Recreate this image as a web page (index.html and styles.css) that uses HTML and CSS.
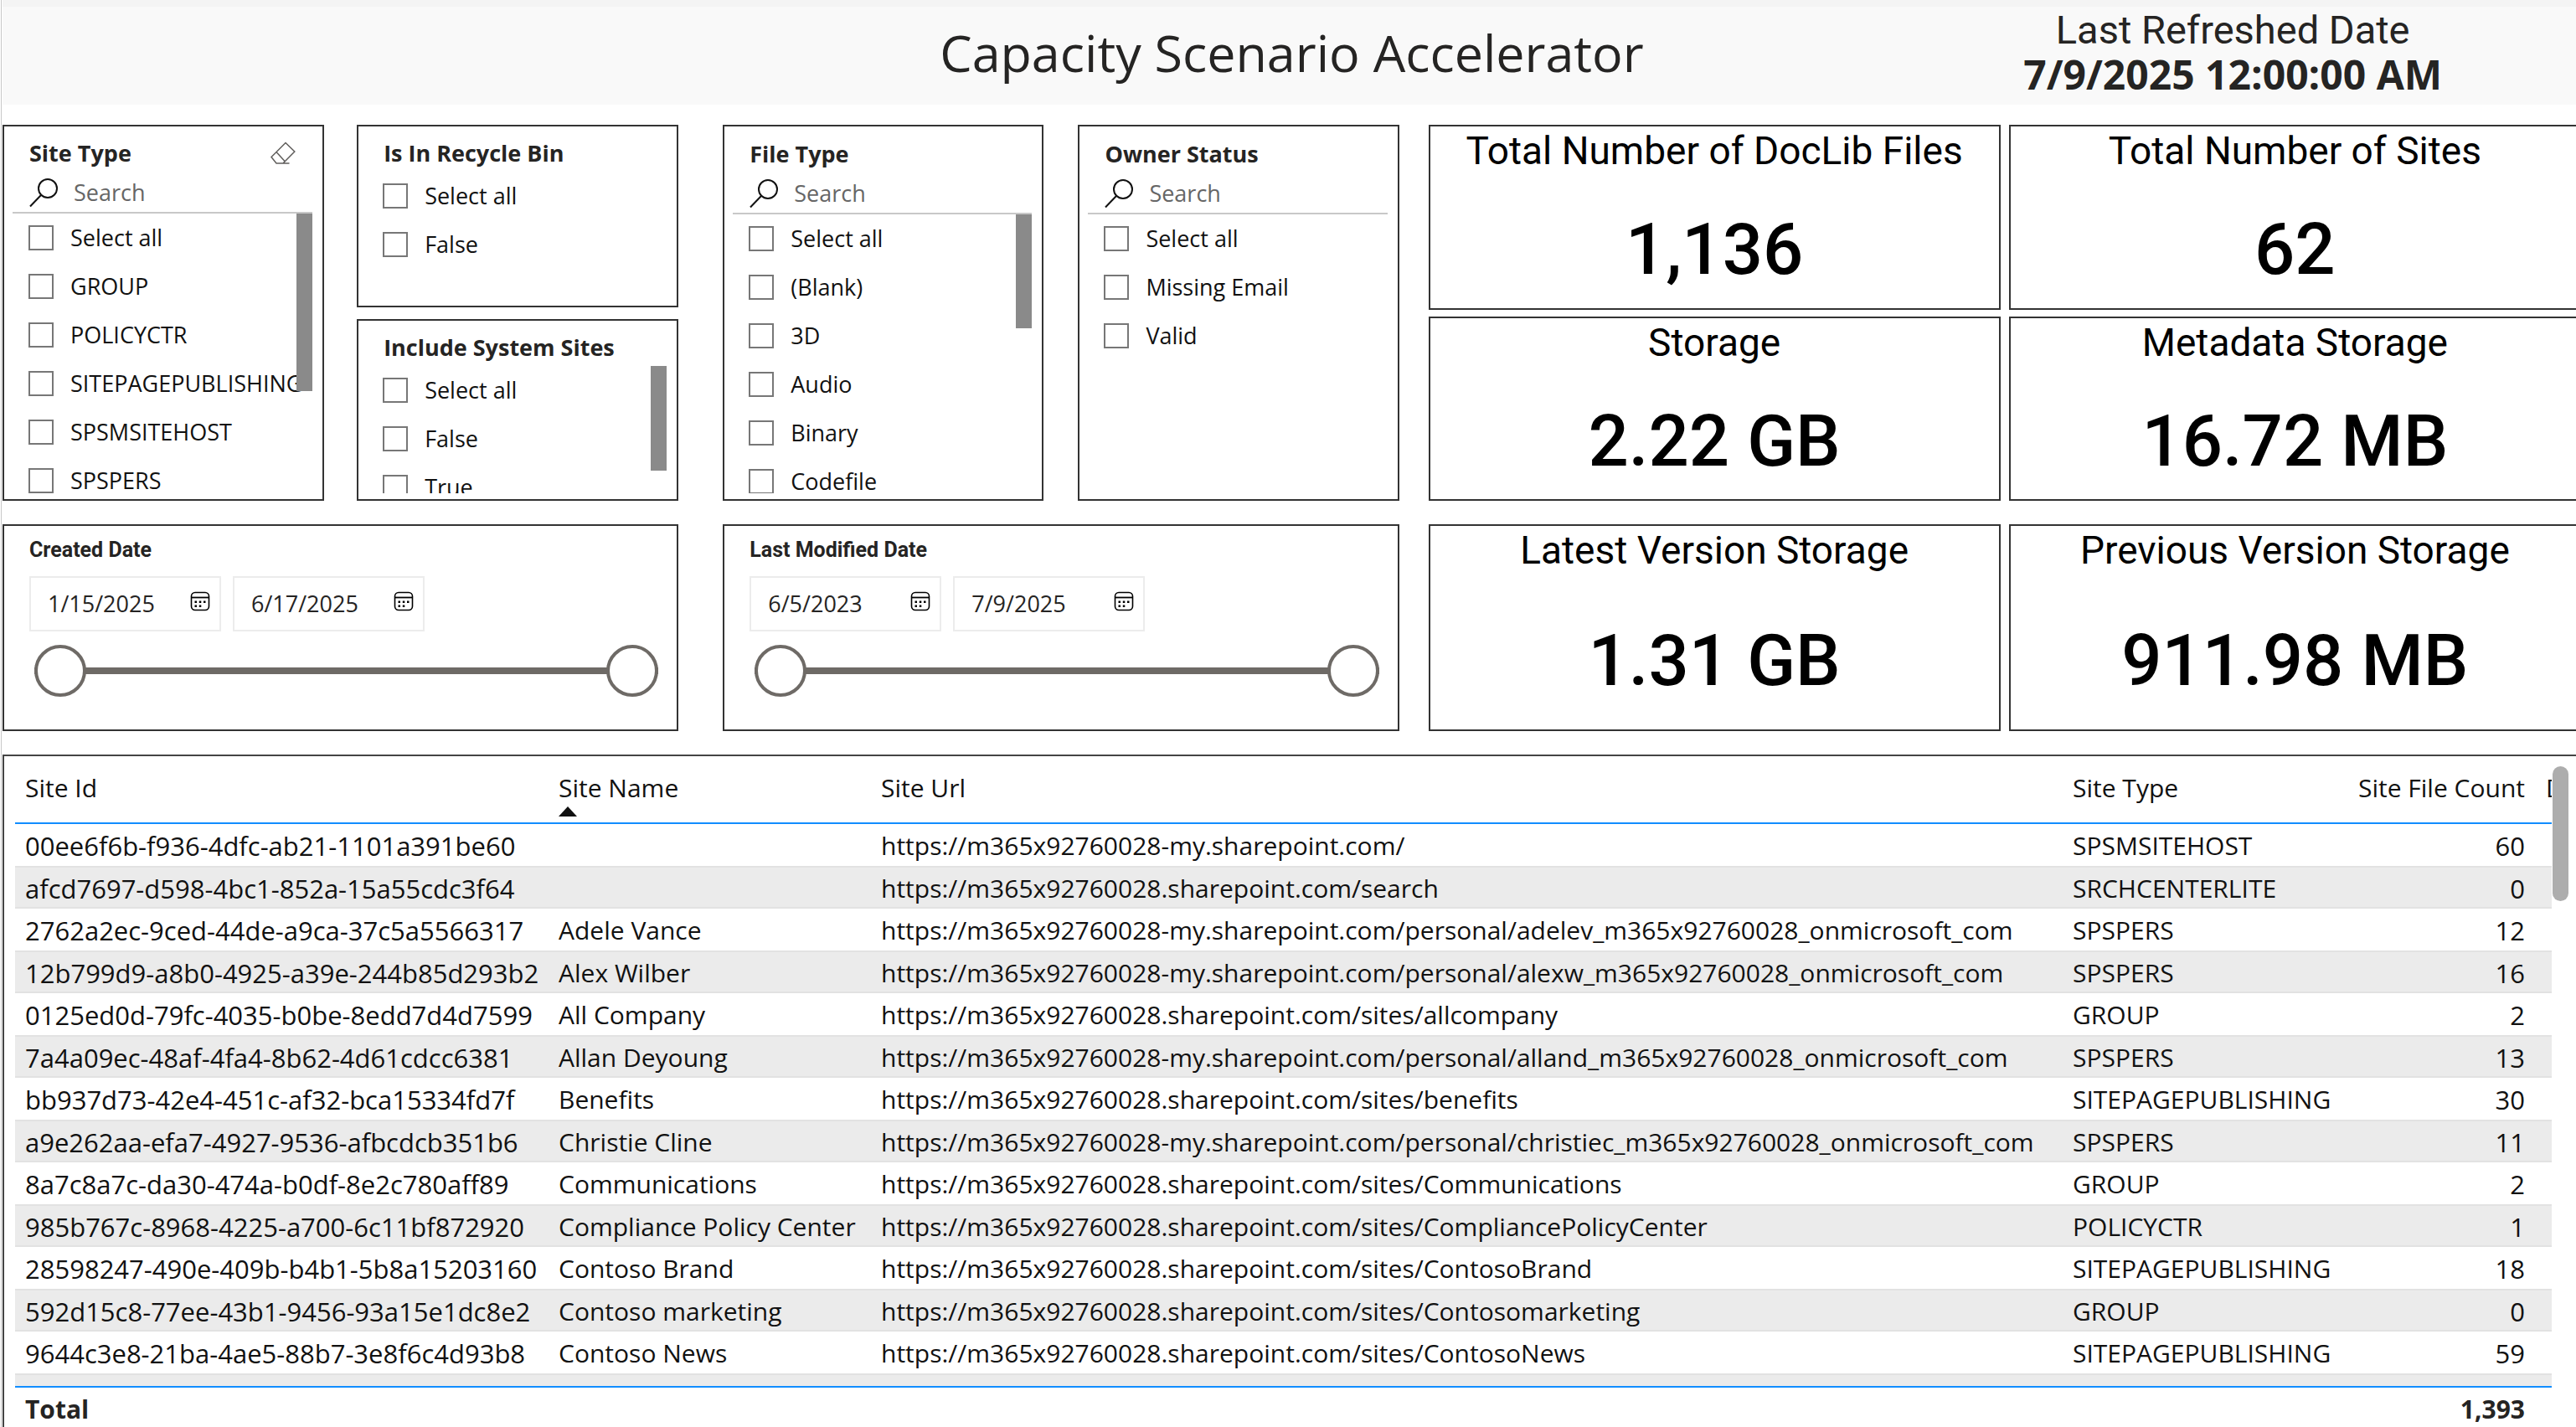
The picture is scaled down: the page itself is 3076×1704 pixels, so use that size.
FILE: index.html
```html
<!DOCTYPE html>
<html lang="en">
<head>
<meta charset="utf-8">
<title>Capacity Scenario Accelerator</title>
<link rel="stylesheet" href="styles.css">
</head>
<body>
<svg class="sprite" aria-hidden="true">
  <symbol id="icon-search" viewBox="0 0 36 36">
    <circle cx="22" cy="13" r="11" fill="none" stroke="currentColor" stroke-width="2"/>
    <path d="M14.2 20.8 1 34.5" fill="none" stroke="currentColor" stroke-width="2"/>
  </symbol>
  <symbol id="icon-eraser" viewBox="0 0 30 28">
    <path d="M18 1.5 28.8 12 15 26H7L1 18.5Z M7 12.5 17 23.5 M7 26H22.500" fill="none" stroke="currentColor" stroke-width="1.5"/>
  </symbol>
  <symbol id="icon-calendar" viewBox="0 0 24 24">
    <rect x="1.500" y="1.500" width="21" height="21" rx="4.500" fill="none" stroke="currentColor" stroke-width="1.600"/>
    <path d="M1.500 7.500h21" stroke="currentColor" stroke-width="1.800"/>
    <path d="M5.500 11.500h2.500v2.500h-2.500zM10.800 11.500h2.500v2.500h-2.500zM16 11.500h2.500v2.500h-2.500zM5.500 16.500h2.500v2.500h-2.500zM10.800 16.500h2.500v2.500h-2.500z" fill="currentColor"/>
  </symbol>
</svg>

<main class="report">
  <header class="banner">
    <h1 class="banner-title">Capacity Scenario Accelerator</h1>
    <div class="refreshed">
      <div class="refreshed-label">Last Refreshed Date</div>
      <div class="refreshed-value">7/9/2025 12:00:00 AM</div>
    </div>
  </header>

  <div class="overview">
    <div class="filters">
      <div class="filter-row filter-row-a">
        <section class="panel slicer">
          <div class="slicer-head">
            <h2 class="slicer-title">Site Type</h2>
            <button class="icon-button eraser" type="button" aria-label="Clear selections"><svg><use href="#icon-eraser"/></svg></button>
          </div>
          <div class="search"><svg><use href="#icon-search"/></svg><input type="text" placeholder="Search" aria-label="Search site types"></div>
          <div class="options">
            <label class="option"><input type="checkbox">Select all</label>
            <label class="option"><input type="checkbox">GROUP</label>
            <label class="option"><input type="checkbox">POLICYCTR</label>
            <label class="option"><input type="checkbox">SITEPAGEPUBLISHING</label>
            <label class="option"><input type="checkbox">SPSMSITEHOST</label>
            <label class="option"><input type="checkbox">SPSPERS</label>
            <div class="thumb thumb-large"></div>
          </div>
        </section>
        <div class="stack">
          <section class="panel slicer">
            <div class="slicer-head"><h2 class="slicer-title">Is In Recycle Bin</h2></div>
            <div class="options options-plain">
              <label class="option"><input type="checkbox">Select all</label>
              <label class="option"><input type="checkbox">False</label>
            </div>
          </section>
          <section class="panel slicer">
            <div class="slicer-head"><h2 class="slicer-title">Include System Sites</h2></div>
            <div class="options options-plain">
              <label class="option"><input type="checkbox">Select all</label>
              <label class="option"><input type="checkbox">False</label>
              <label class="option"><input type="checkbox">True</label>
              <div class="thumb thumb-small"></div>
            </div>
          </section>
        </div>
      </div>
      <section class="panel date-panel">
        <h2 class="date-title">Created Date</h2>
        <div class="date-fields">
          <div class="date-box"><input type="text" value="1/15/2025" aria-label="Created from"><button class="icon-button calendar" type="button" aria-label="Pick start date"><svg><use href="#icon-calendar"/></svg></button></div>
          <div class="date-box"><input type="text" value="6/17/2025" aria-label="Created to"><button class="icon-button calendar" type="button" aria-label="Pick end date"><svg><use href="#icon-calendar"/></svg></button></div>
        </div>
        <div class="slider">
          <input class="range" type="range" value="0" aria-label="Created range start">
          <input class="range range-end" type="range" value="100" aria-label="Created range end">
        </div>
      </section>
    </div>

    <div class="filters filters-b">
      <div class="filter-row filter-row-b">
        <section class="panel slicer">
          <div class="slicer-head"><h2 class="slicer-title">File Type</h2></div>
          <div class="search"><svg><use href="#icon-search"/></svg><input type="text" placeholder="Search" aria-label="Search file types"></div>
          <div class="options">
            <label class="option"><input type="checkbox">Select all</label>
            <label class="option"><input type="checkbox">(Blank)</label>
            <label class="option"><input type="checkbox">3D</label>
            <label class="option"><input type="checkbox">Audio</label>
            <label class="option"><input type="checkbox">Binary</label>
            <label class="option"><input type="checkbox">Codefile</label>
            <div class="thumb thumb-medium"></div>
          </div>
        </section>
        <section class="panel slicer">
          <div class="slicer-head"><h2 class="slicer-title">Owner Status</h2></div>
          <div class="search"><svg><use href="#icon-search"/></svg><input type="text" placeholder="Search" aria-label="Search owner statuses"></div>
          <div class="options">
            <label class="option"><input type="checkbox">Select all</label>
            <label class="option"><input type="checkbox">Missing Email</label>
            <label class="option"><input type="checkbox">Valid</label>
          </div>
        </section>
      </div>
      <section class="panel date-panel">
        <h2 class="date-title">Last Modified Date</h2>
        <div class="date-fields">
          <div class="date-box"><input type="text" value="6/5/2023" aria-label="Modified from"><button class="icon-button calendar" type="button" aria-label="Pick start date"><svg><use href="#icon-calendar"/></svg></button></div>
          <div class="date-box"><input type="text" value="7/9/2025" aria-label="Modified to"><button class="icon-button calendar" type="button" aria-label="Pick end date"><svg><use href="#icon-calendar"/></svg></button></div>
        </div>
        <div class="slider">
          <input class="range" type="range" value="0" aria-label="Modified range start">
          <input class="range range-end" type="range" value="100" aria-label="Modified range end">
        </div>
      </section>
    </div>

    <div class="cards">
      <div class="card-group">
        <section class="panel card"><h2 class="card-title">Total Number of DocLib Files</h2><div class="card-value">1,136</div></section>
        <section class="panel card"><h2 class="card-title">Total Number of Sites</h2><div class="card-value">62</div></section>
        <section class="panel card"><h2 class="card-title">Storage</h2><div class="card-value">2.22 GB</div></section>
        <section class="panel card"><h2 class="card-title">Metadata Storage</h2><div class="card-value">16.72 MB</div></section>
      </div>
      <div class="card-group card-group-versions">
        <section class="panel card"><h2 class="card-title">Latest Version Storage</h2><div class="card-value">1.31 GB</div></section>
        <section class="panel card"><h2 class="card-title">Previous Version Storage</h2><div class="card-value">911.98 MB</div></section>
      </div>
    </div>
  </div>

  <section class="grid-panel">
    <div class="grid-scroll">
      <table class="grid">
        <colgroup><col class="col-id"><col class="col-name"><col class="col-url"><col class="col-type"><col class="col-count"><col class="col-more"></colgroup>
        <thead>
          <tr><th scope="col">Site Id</th><th scope="col" aria-sort="ascending">Site Name<span class="sort-arrow"></span></th><th scope="col">Site Url</th><th scope="col">Site Type</th><th scope="col" class="num">Site File Count</th><th scope="col">D</th></tr>
        </thead>
        <tbody>
          <tr><td class="id">00ee6f6b-f936-4dfc-ab21-1101a391be60</td><td></td><td>https://m365x92760028-my.sharepoint.com/</td><td>SPSMSITEHOST</td><td class="num">60</td><td></td></tr>
          <tr><td class="id">afcd7697-d598-4bc1-852a-15a55cdc3f64</td><td></td><td>https://m365x92760028.sharepoint.com/search</td><td>SRCHCENTERLITE</td><td class="num">0</td><td></td></tr>
          <tr><td class="id">2762a2ec-9ced-44de-a9ca-37c5a5566317</td><td>Adele Vance</td><td>https://m365x92760028-my.sharepoint.com/personal/adelev_m365x92760028_onmicrosoft_com</td><td>SPSPERS</td><td class="num">12</td><td></td></tr>
          <tr><td class="id">12b799d9-a8b0-4925-a39e-244b85d293b2</td><td>Alex Wilber</td><td>https://m365x92760028-my.sharepoint.com/personal/alexw_m365x92760028_onmicrosoft_com</td><td>SPSPERS</td><td class="num">16</td><td></td></tr>
          <tr><td class="id">0125ed0d-79fc-4035-b0be-8edd7d4d7599</td><td>All Company</td><td>https://m365x92760028.sharepoint.com/sites/allcompany</td><td>GROUP</td><td class="num">2</td><td></td></tr>
          <tr><td class="id">7a4a09ec-48af-4fa4-8b62-4d61cdcc6381</td><td>Allan Deyoung</td><td>https://m365x92760028-my.sharepoint.com/personal/alland_m365x92760028_onmicrosoft_com</td><td>SPSPERS</td><td class="num">13</td><td></td></tr>
          <tr><td class="id">bb937d73-42e4-451c-af32-bca15334fd7f</td><td>Benefits</td><td>https://m365x92760028.sharepoint.com/sites/benefits</td><td>SITEPAGEPUBLISHING</td><td class="num">30</td><td></td></tr>
          <tr><td class="id">a9e262aa-efa7-4927-9536-afbcdcb351b6</td><td>Christie Cline</td><td>https://m365x92760028-my.sharepoint.com/personal/christiec_m365x92760028_onmicrosoft_com</td><td>SPSPERS</td><td class="num">11</td><td></td></tr>
          <tr><td class="id">8a7c8a7c-da30-474a-b0df-8e2c780aff89</td><td>Communications</td><td>https://m365x92760028.sharepoint.com/sites/Communications</td><td>GROUP</td><td class="num">2</td><td></td></tr>
          <tr><td class="id">985b767c-8968-4225-a700-6c11bf872920</td><td>Compliance Policy Center</td><td>https://m365x92760028.sharepoint.com/sites/CompliancePolicyCenter</td><td>POLICYCTR</td><td class="num">1</td><td></td></tr>
          <tr><td class="id">28598247-490e-409b-b4b1-5b8a15203160</td><td>Contoso Brand</td><td>https://m365x92760028.sharepoint.com/sites/ContosoBrand</td><td>SITEPAGEPUBLISHING</td><td class="num">18</td><td></td></tr>
          <tr><td class="id">592d15c8-77ee-43b1-9456-93a15e1dc8e2</td><td>Contoso marketing</td><td>https://m365x92760028.sharepoint.com/sites/Contosomarketing</td><td>GROUP</td><td class="num">0</td><td></td></tr>
          <tr><td class="id">9644c3e8-21ba-4ae5-88b7-3e8f6c4d93b8</td><td>Contoso News</td><td>https://m365x92760028.sharepoint.com/sites/ContosoNews</td><td>SITEPAGEPUBLISHING</td><td class="num">59</td><td></td></tr>
          <tr class="last"><td class="id">daecff97-4cfb-4079-9673-08fc077a09c0</td><td>Contoso Team</td><td>https://m365x92760028.sharepoint.com/sites/ContosoTeam</td><td>GROUP</td><td class="num">41</td><td></td></tr>
        </tbody>
        <tfoot>
          <tr><th scope="row">Total</th><td></td><td></td><td></td><td class="num">1,393</td><td></td></tr>
        </tfoot>
      </table>
    </div>
    <div class="grid-rail"><div class="grid-thumb"></div></div>
  </section>
</main>
</body>
</html>
```
FILE: styles.css
```css
* {
  box-sizing: border-box;
}

body {
  margin: 0;
  overflow: hidden;
  background: #fff;
  color: #252423;
  font-family: "Open Sans", "Noto Sans", sans-serif;
}

h1, h2 {
  margin: 0;
}

.sprite {
  display: none;
}

/* The report canvas runs a little past the right edge of the window. */
.report {
  display: flex;
  flex-direction: column;
  height: 100vh;
  margin-left: 1px;
  margin-right: -6px;
  padding-left: 1px;
  border-left: 1px solid #c8c8c8;
}

.banner {
  display: grid;
  grid-template-columns: 1fr auto 1fr;
  align-items: center;
  flex: none;
  height: 125px;
  background: #f9f9f9;
  box-shadow: inset 0 8px #f4f4f4;
}

.banner-title {
  grid-column: 2;
  font-size: 61px;
  font-weight: 400;
  line-height: 80px;
}

.refreshed {
  justify-self: end;
  padding-right: 166px;
  text-align: center;
}

.refreshed-label {
  font-family: Roboto, sans-serif;
  font-size: 47px;
  line-height: 52px;
}

.refreshed-value {
  font-size: 48px;
  font-weight: 700;
  line-height: 54px;
}

.overview {
  display: flex;
  flex: none;
  margin-top: 24px;
}

.panel {
  border: 2px solid #333;
  background: #fff;
}

.filters {
  flex: 807 1 0;
  min-width: 0;
}

.filters-b {
  margin-left: 53px;
}

.filter-row {
  display: grid;
  grid-template-columns: 1fr 1fr;
  height: 449px;
  margin-bottom: 28px;
}

.filter-row-a {
  column-gap: 39px;
}

.filter-row-b {
  column-gap: 41px;
}

.stack {
  display: grid;
  grid-template-rows: 1fr 1fr;
  row-gap: 14px;
  min-height: 0;
}

.slicer {
  display: flex;
  flex-direction: column;
  min-width: 0;
  min-height: 0;
  padding: 14px 12px 7px 10px;
}

.filter-row-b .slicer {
  padding-top: 15px;
}

.slicer-head {
  display: flex;
  align-items: center;
  justify-content: space-between;
  flex: none;
  height: 36px;
  padding: 0 20px;
}

.slicer-title {
  font-size: 27px;
  font-weight: 700;
  line-height: 36px;
}

.icon-button {
  display: block;
  padding: 0;
  border: 0;
  background: none;
}

.icon-button svg {
  display: block;
  width: 100%;
  height: 100%;
}

.eraser {
  width: 30px;
  height: 28px;
  color: #605e5c;
}

.search {
  display: flex;
  align-items: center;
  flex: none;
  gap: 17px;
  height: 54px;
  padding: 6px 20px 0;
  border-bottom: 2px solid #c8c8c8;
}

.search svg {
  flex: none;
  width: 36px;
  height: 36px;
  color: #111;
}

.search input {
  width: 100%;
  min-width: 0;
  padding: 0;
  border: 0;
  outline: 0;
  background: none;
  color: #252423;
  font: 400 27px/36px "Open Sans", sans-serif;
}

.search input::placeholder {
  color: #666;
  opacity: 1;
}

.options {
  position: relative;
  flex: 1;
  min-height: 0;
  overflow: hidden;
}

.options-plain {
  margin-top: 4px;
}

.option {
  display: flex;
  align-items: center;
  gap: 20px;
  height: 58px;
  padding-left: 19px;
  color: #111;
  font-size: 27px;
  line-height: 36px;
  white-space: nowrap;
}

.option input {
  appearance: none;
  flex: none;
  width: 30px;
  height: 30px;
  margin: 0;
  border: 2px solid #777;
  background: #fff;
}

.thumb {
  position: absolute;
  top: 0;
  right: 0;
  width: 19px;
  background: #8a8a8a;
}

.thumb-large {
  height: 212px;
}

.thumb-medium {
  height: 136px;
}

.thumb-small {
  height: 125px;
}

.date-panel {
  height: 247px;
  padding: 13px 22px 0 30px;
}

.date-title {
  font: 700 25px/32px Roboto, sans-serif;
}

.date-fields {
  display: flex;
  gap: 14px;
  margin-top: 15px;
}

.date-box {
  display: flex;
  align-items: center;
  justify-content: space-between;
  width: 229px;
  height: 66px;
  padding: 0 11px 0 20px;
  border: 2px solid #ececec;
}

.date-box input {
  width: 150px;
  padding: 0;
  border: 0;
  outline: 0;
  background: none;
  color: #252423;
  font: 400 27px/36px "Open Sans", sans-serif;
}

.calendar {
  width: 24px;
  height: 24px;
  margin-bottom: 6px;
}

/* Two range inputs share one grid cell, one for each end of the interval. */
.slider {
  display: grid;
  align-items: center;
  height: 62px;
  margin: 16px 0 0 6px;
}

.range {
  appearance: none;
  grid-area: 1 / 1;
  width: 100%;
  height: 62px;
  margin: 0;
  background: none;
  pointer-events: none;
}

.range::-webkit-slider-runnable-track {
  height: 8px;
  background: #6e6a66;
}

.range-end::-webkit-slider-runnable-track {
  background: none;
}

.range::-webkit-slider-thumb {
  appearance: none;
  width: 62px;
  height: 62px;
  margin-top: -27px;
  border: 4px solid #6e6a66;
  border-radius: 50%;
  background: #fff;
  pointer-events: auto;
}

.cards {
  display: flex;
  flex-direction: column;
  flex: 1376 1 0;
  gap: 28px;
  min-width: 0;
  margin-left: 35px;
}

.card-group {
  display: grid;
  grid-template-columns: 1fr 1fr;
  grid-auto-rows: 1fr;
  gap: 8px 10px;
  height: 449px;
}

.card-group-versions {
  height: 247px;
}

.card {
  display: flex;
  flex-direction: column;
  padding-top: 2px;
  color: #000;
  font-family: Roboto, sans-serif;
  text-align: center;
}

.card-title {
  font-size: 46px;
  font-weight: 400;
  line-height: 54px;
}

.card-value {
  display: flex;
  align-items: center;
  justify-content: center;
  flex: 1;
  padding-top: 22px;
  font-size: 85px;
  font-weight: 500;
  line-height: 98px;
}

.grid-panel {
  display: flex;
  flex: 1;
  min-height: 0;
  margin-top: 28px;
  padding-left: 13px;
  border-top: 2px solid #444;
  border-left: 2px solid #444;
}

.grid-scroll {
  flex: 1;
  min-width: 0;
  overflow: hidden;
}

.grid-rail {
  flex: none;
  width: 35px;
  padding: 12px 0 0 1px;
}

.grid-thumb {
  width: 19px;
  height: 161px;
  border-radius: 10px;
  background: #adadad;
}

.grid {
  width: 100%;
  border-spacing: 0;
  table-layout: fixed;
  color: #111;
  font-size: 30px;
  line-height: 40px;
}

.col-id { width: 636px; }
.col-name { width: 385px; }
.col-type { width: 335px; }
.col-count { width: 230px; }
.col-more { width: 20px; }

.grid th,
.grid td {
  overflow: hidden;
  padding: 2px 12px 0 13px;
  text-align: left;
  white-space: nowrap;
}

.grid th:first-child,
.grid td:first-child {
  padding-left: 12px;
}

.grid thead th {
  position: sticky;
  top: 0;
  height: 81px;
  padding-top: 18px;
  border-bottom: 2px solid #118dff;
  background: #fff;
  font-weight: 400;
  vertical-align: top;
}

.sort-arrow {
  display: block;
  width: 22px;
  height: 12px;
  margin-top: 2px;
  background: #111;
  clip-path: polygon(50% 0, 100% 100%, 0 100%);
}

.grid tbody td {
  height: 50px;
}

.grid tbody tr:nth-child(even) td {
  height: 51px;
  border-top: 2px solid #e2e2e2;
  border-bottom: 2px solid #e2e2e2;
  background: #ebebeb;
}

.grid .id,
.grid tbody .num {
  font-size: 31px;
}

.grid .num {
  text-align: right;
}

.grid tfoot th,
.grid tfoot td {
  position: sticky;
  bottom: 0;
  height: 49px;
  padding-top: 4px;
  border-top: 2px solid #118dff;
  background: #fff;
  color: #252423;
  font-weight: 700;
}
```
